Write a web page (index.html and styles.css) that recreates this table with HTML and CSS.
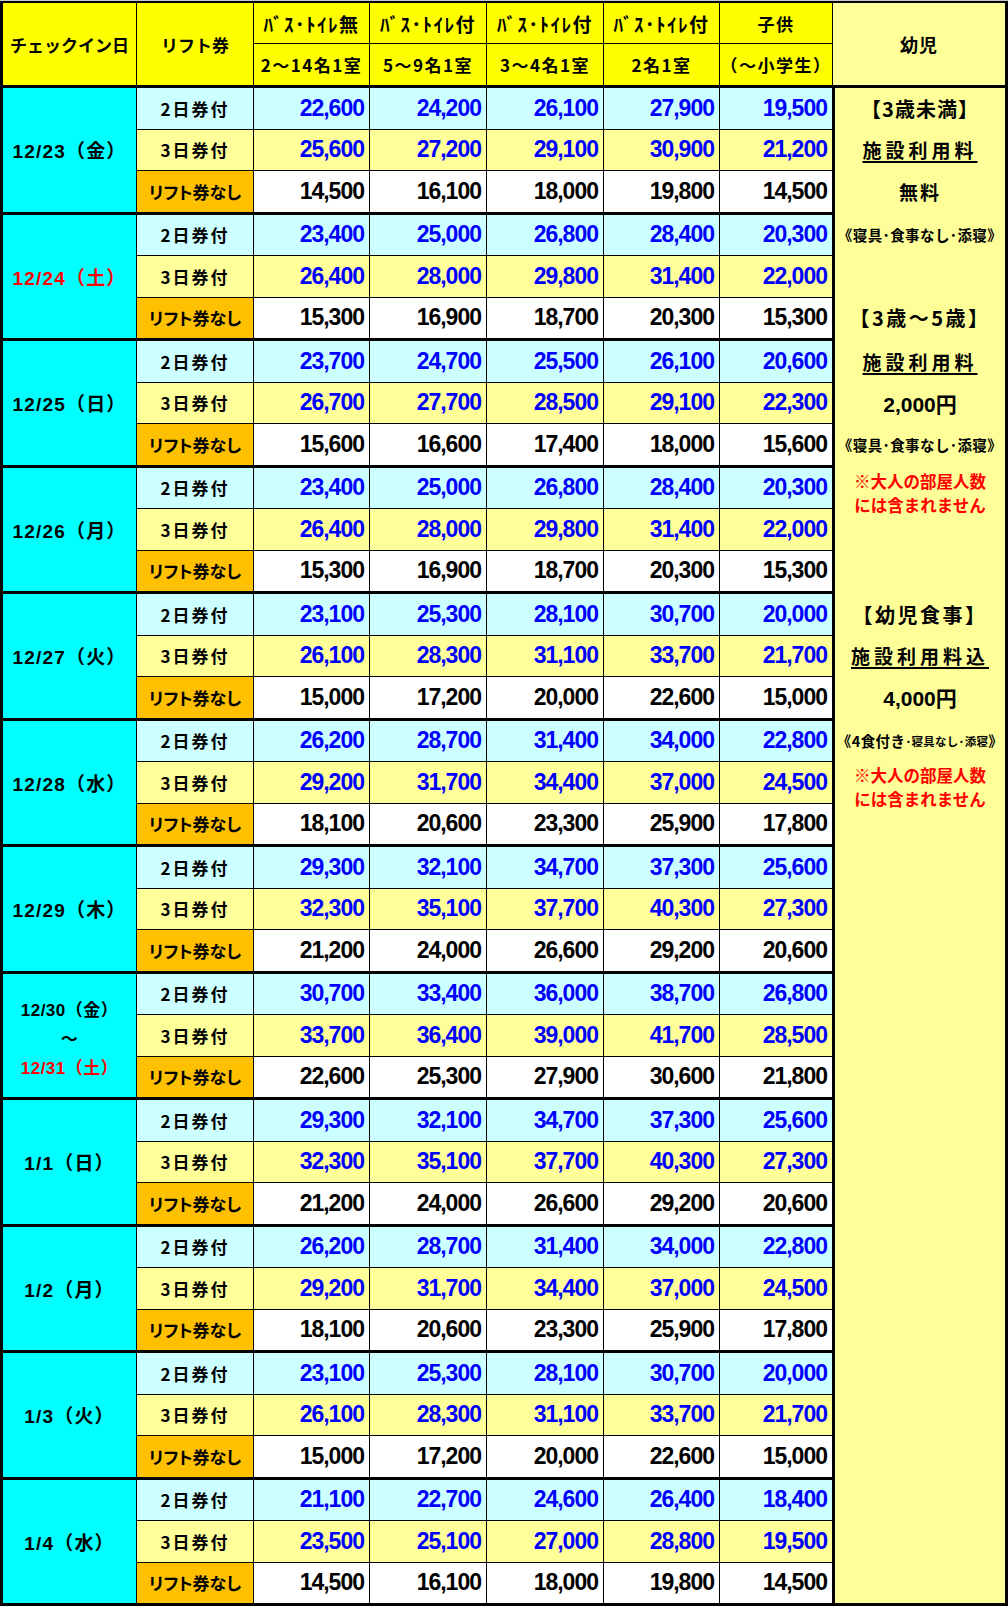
FILE: index.html
```html
<!DOCTYPE html>
<html lang="ja">
<head>
<meta charset="utf-8">
<title>料金表</title>
<link rel="stylesheet" href="styles.css">
</head>
<body>
<div class="sheet">
  <!-- 幼児 column -->
  <div class="infant-bg"></div>
  <div class="inf r4 bracket narrow">【3歳未満】</div>
  <div class="inf r5 under">施設利用料</div>
  <div class="inf r6 main">無料</div>
  <div class="inf r8 note">《寝具･食事なし･添寝》</div>
  <div class="inf r10 bracket">【3歳～5歳】</div>
  <div class="inf r12 under">施設利用料</div>
  <div class="inf r13 main num">2,000円</div>
  <div class="inf r14 note">《寝具･食事なし･添寝》</div>
  <div class="inf r16 warn">※大人の部屋人数<br>には含まれません</div>
  <div class="inf r20 bracket">【幼児食事】</div>
  <div class="inf r21 under">施設利用料込</div>
  <div class="inf r22 main num">4,000円</div>
  <div class="inf r24 note"><span>《4食付き</span><span class="tiny">･寝具なし･添寝</span><span>》</span></div>
  <div class="inf r25 warn">※大人の部屋人数<br>には含まれません</div>

  <!-- header -->
  <div class="hd tall">チェックイン日</div>
  <div class="hd tall">リフト券</div>
  <div class="hd kana">ﾊﾞｽ･ﾄｲﾚ無</div>
  <div class="hd kana">ﾊﾞｽ･ﾄｲﾚ付</div>
  <div class="hd kana">ﾊﾞｽ･ﾄｲﾚ付</div>
  <div class="hd kana">ﾊﾞｽ･ﾄｲﾚ付</div>
  <div class="hd">子供</div>
  <div class="hd tall light">幼児</div>
  <div class="hd">2～14名1室</div>
  <div class="hd">5～9名1室</div>
  <div class="hd">3～4名1室</div>
  <div class="hd">2名1室</div>
  <div class="hd">（～小学生）</div>
  <div class="sep-h"></div>

  <!-- 12/23 -->
  <div class="date">12/23（金）</div>
  <div class="lbl d2">2日券付</div><div class="n d2">22,600</div><div class="n d2">24,200</div><div class="n d2">26,100</div><div class="n d2">27,900</div><div class="n d2">19,500</div>
  <div class="lbl d3">3日券付</div><div class="n d3">25,600</div><div class="n d3">27,200</div><div class="n d3">29,100</div><div class="n d3">30,900</div><div class="n d3">21,200</div>
  <div class="lbl d0">リフト券なし</div><div class="n d0">14,500</div><div class="n d0">16,100</div><div class="n d0">18,000</div><div class="n d0">19,800</div><div class="n d0">14,500</div>
  <div class="sep"></div>

  <!-- 12/24 -->
  <div class="date red">12/24（土）</div>
  <div class="lbl d2">2日券付</div><div class="n d2">23,400</div><div class="n d2">25,000</div><div class="n d2">26,800</div><div class="n d2">28,400</div><div class="n d2">20,300</div>
  <div class="lbl d3">3日券付</div><div class="n d3">26,400</div><div class="n d3">28,000</div><div class="n d3">29,800</div><div class="n d3">31,400</div><div class="n d3">22,000</div>
  <div class="lbl d0">リフト券なし</div><div class="n d0">15,300</div><div class="n d0">16,900</div><div class="n d0">18,700</div><div class="n d0">20,300</div><div class="n d0">15,300</div>
  <div class="sep"></div>

  <!-- 12/25 -->
  <div class="date">12/25（日）</div>
  <div class="lbl d2">2日券付</div><div class="n d2">23,700</div><div class="n d2">24,700</div><div class="n d2">25,500</div><div class="n d2">26,100</div><div class="n d2">20,600</div>
  <div class="lbl d3">3日券付</div><div class="n d3">26,700</div><div class="n d3">27,700</div><div class="n d3">28,500</div><div class="n d3">29,100</div><div class="n d3">22,300</div>
  <div class="lbl d0">リフト券なし</div><div class="n d0">15,600</div><div class="n d0">16,600</div><div class="n d0">17,400</div><div class="n d0">18,000</div><div class="n d0">15,600</div>
  <div class="sep"></div>

  <!-- 12/26 -->
  <div class="date">12/26（月）</div>
  <div class="lbl d2">2日券付</div><div class="n d2">23,400</div><div class="n d2">25,000</div><div class="n d2">26,800</div><div class="n d2">28,400</div><div class="n d2">20,300</div>
  <div class="lbl d3">3日券付</div><div class="n d3">26,400</div><div class="n d3">28,000</div><div class="n d3">29,800</div><div class="n d3">31,400</div><div class="n d3">22,000</div>
  <div class="lbl d0">リフト券なし</div><div class="n d0">15,300</div><div class="n d0">16,900</div><div class="n d0">18,700</div><div class="n d0">20,300</div><div class="n d0">15,300</div>
  <div class="sep"></div>

  <!-- 12/27 -->
  <div class="date">12/27（火）</div>
  <div class="lbl d2">2日券付</div><div class="n d2">23,100</div><div class="n d2">25,300</div><div class="n d2">28,100</div><div class="n d2">30,700</div><div class="n d2">20,000</div>
  <div class="lbl d3">3日券付</div><div class="n d3">26,100</div><div class="n d3">28,300</div><div class="n d3">31,100</div><div class="n d3">33,700</div><div class="n d3">21,700</div>
  <div class="lbl d0">リフト券なし</div><div class="n d0">15,000</div><div class="n d0">17,200</div><div class="n d0">20,000</div><div class="n d0">22,600</div><div class="n d0">15,000</div>
  <div class="sep"></div>

  <!-- 12/28 -->
  <div class="date">12/28（水）</div>
  <div class="lbl d2">2日券付</div><div class="n d2">26,200</div><div class="n d2">28,700</div><div class="n d2">31,400</div><div class="n d2">34,000</div><div class="n d2">22,800</div>
  <div class="lbl d3">3日券付</div><div class="n d3">29,200</div><div class="n d3">31,700</div><div class="n d3">34,400</div><div class="n d3">37,000</div><div class="n d3">24,500</div>
  <div class="lbl d0">リフト券なし</div><div class="n d0">18,100</div><div class="n d0">20,600</div><div class="n d0">23,300</div><div class="n d0">25,900</div><div class="n d0">17,800</div>
  <div class="sep"></div>

  <!-- 12/29 -->
  <div class="date">12/29（木）</div>
  <div class="lbl d2">2日券付</div><div class="n d2">29,300</div><div class="n d2">32,100</div><div class="n d2">34,700</div><div class="n d2">37,300</div><div class="n d2">25,600</div>
  <div class="lbl d3">3日券付</div><div class="n d3">32,300</div><div class="n d3">35,100</div><div class="n d3">37,700</div><div class="n d3">40,300</div><div class="n d3">27,300</div>
  <div class="lbl d0">リフト券なし</div><div class="n d0">21,200</div><div class="n d0">24,000</div><div class="n d0">26,600</div><div class="n d0">29,200</div><div class="n d0">20,600</div>
  <div class="sep"></div>

  <!-- 12/30 - 12/31 -->
  <div class="date multi"><span>12/30（金）</span><span>～</span><span class="red">12/31（土）</span></div>
  <div class="lbl d2">2日券付</div><div class="n d2">30,700</div><div class="n d2">33,400</div><div class="n d2">36,000</div><div class="n d2">38,700</div><div class="n d2">26,800</div>
  <div class="lbl d3">3日券付</div><div class="n d3">33,700</div><div class="n d3">36,400</div><div class="n d3">39,000</div><div class="n d3">41,700</div><div class="n d3">28,500</div>
  <div class="lbl d0">リフト券なし</div><div class="n d0">22,600</div><div class="n d0">25,300</div><div class="n d0">27,900</div><div class="n d0">30,600</div><div class="n d0">21,800</div>
  <div class="sep"></div>

  <!-- 1/1 -->
  <div class="date">1/1（日）</div>
  <div class="lbl d2">2日券付</div><div class="n d2">29,300</div><div class="n d2">32,100</div><div class="n d2">34,700</div><div class="n d2">37,300</div><div class="n d2">25,600</div>
  <div class="lbl d3">3日券付</div><div class="n d3">32,300</div><div class="n d3">35,100</div><div class="n d3">37,700</div><div class="n d3">40,300</div><div class="n d3">27,300</div>
  <div class="lbl d0">リフト券なし</div><div class="n d0">21,200</div><div class="n d0">24,000</div><div class="n d0">26,600</div><div class="n d0">29,200</div><div class="n d0">20,600</div>
  <div class="sep"></div>

  <!-- 1/2 -->
  <div class="date">1/2（月）</div>
  <div class="lbl d2">2日券付</div><div class="n d2">26,200</div><div class="n d2">28,700</div><div class="n d2">31,400</div><div class="n d2">34,000</div><div class="n d2">22,800</div>
  <div class="lbl d3">3日券付</div><div class="n d3">29,200</div><div class="n d3">31,700</div><div class="n d3">34,400</div><div class="n d3">37,000</div><div class="n d3">24,500</div>
  <div class="lbl d0">リフト券なし</div><div class="n d0">18,100</div><div class="n d0">20,600</div><div class="n d0">23,300</div><div class="n d0">25,900</div><div class="n d0">17,800</div>
  <div class="sep"></div>

  <!-- 1/3 -->
  <div class="date">1/3（火）</div>
  <div class="lbl d2">2日券付</div><div class="n d2">23,100</div><div class="n d2">25,300</div><div class="n d2">28,100</div><div class="n d2">30,700</div><div class="n d2">20,000</div>
  <div class="lbl d3">3日券付</div><div class="n d3">26,100</div><div class="n d3">28,300</div><div class="n d3">31,100</div><div class="n d3">33,700</div><div class="n d3">21,700</div>
  <div class="lbl d0">リフト券なし</div><div class="n d0">15,000</div><div class="n d0">17,200</div><div class="n d0">20,000</div><div class="n d0">22,600</div><div class="n d0">15,000</div>
  <div class="sep"></div>

  <!-- 1/4 -->
  <div class="date">1/4（水）</div>
  <div class="lbl d2">2日券付</div><div class="n d2">21,100</div><div class="n d2">22,700</div><div class="n d2">24,600</div><div class="n d2">26,400</div><div class="n d2">18,400</div>
  <div class="lbl d3">3日券付</div><div class="n d3">23,500</div><div class="n d3">25,100</div><div class="n d3">27,000</div><div class="n d3">28,800</div><div class="n d3">19,500</div>
  <div class="lbl d0">リフト券なし</div><div class="n d0">14,500</div><div class="n d0">16,100</div><div class="n d0">18,000</div><div class="n d0">19,800</div><div class="n d0">14,500</div>
</div>
</body>
</html>
```

FILE: styles.css
```css
html, body {
  margin: 0;
  padding: 0;
  background: #ffffff;
}

body {
  font-family: "Noto Sans CJK JP", sans-serif;
  font-weight: 700;
  color: #000000;
}

.sheet {
  display: grid;
  width: 1002px;
  grid-template-columns: 133px 116px 115px 116px 116px 115px 112px 172px;
  grid-template-rows:
    40px 41px 1px
    repeat(11, 40.5px 40.5px 40.5px 1px)
    40.5px 40.5px 40.5px;
  gap: 1px;
  background: #000000;
  border-top: 1px solid #c8c8c8;
  padding: 2px 3px 3px 3px;
}

/* header */
.hd {
  background: #ffff00;
  display: flex;
  align-items: center;
  justify-content: center;
  font-size: 17px;
  letter-spacing: 1.5px;
  white-space: nowrap;
}
.hd.kana {
  font-size: 19px;
  letter-spacing: 1.5px;
}
.hd.tall {
  grid-row: span 2;
  letter-spacing: 0;
}
.hd.light {
  background: #ffff99;
  font-size: 18px;
  letter-spacing: 1px;
}

.sep-h {
  grid-column: 1 / -1;
}
.sep {
  grid-column: 1 / span 7;
}

/* date column */
.date {
  grid-row: span 3;
  background: #00ffff;
  display: flex;
  align-items: center;
  justify-content: center;
  font-family: "Liberation Sans", "Noto Sans CJK JP", sans-serif;
  font-size: 19px;
  letter-spacing: 1.2px;
  white-space: nowrap;
}
.date.multi {
  flex-direction: column;
  font-size: 17px;
  line-height: 29px;
  padding-top: 8px;
  letter-spacing: 0.5px;
}
.red {
  color: #ff0000;
}

/* lift labels */
.lbl {
  display: flex;
  align-items: center;
  justify-content: center;
  font-size: 17px;
  letter-spacing: 2px;
  white-space: nowrap;
}
.lbl.d0 {
  background: #ffc000;
  letter-spacing: 0;
  font-feature-settings: "palt";
}

/* numbers */
.n {
  display: flex;
  align-items: center;
  justify-content: flex-end;
  padding-right: 5px;
  font-family: "Liberation Sans", sans-serif;
  font-size: 23px;
  letter-spacing: -1px;
}
.d2 {
  background: #ccffff;
}
.d3 {
  background: #ffff99;
}
.n.d2, .n.d3 {
  color: #0000ff;
}
.d0 {
  background: #ffffff;
}

/* infant column */
.infant-bg {
  grid-column: 8;
  grid-row: 4 / -1;
  background: #ffff99;
  border-left: 2px solid #000000;
}
.inf {
  grid-column: 8;
  display: flex;
  align-items: center;
  justify-content: center;
  padding-left: 2px;
  white-space: nowrap;
  font-size: 19px;
}
.inf.bracket {
  font-size: 20px;
  letter-spacing: 2.5px;
}
.inf.bracket.narrow {
  letter-spacing: 1px;
}
.inf.under {
  letter-spacing: 4px;
  text-decoration: underline;
  text-decoration-thickness: 1.5px;
  text-underline-offset: 3px;
}
.inf.main {
  letter-spacing: 2px;
}
.inf.num {
  font-family: "Liberation Sans", "Noto Sans CJK JP", sans-serif;
  font-size: 21px;
  letter-spacing: 0;
}
.inf.note {
  font-size: 14.5px;
  letter-spacing: 0.4px;
}
.inf.note .tiny {
  font-size: 11.5px;
  letter-spacing: 0.3px;
}
.inf.warn {
  color: #ff0000;
  font-size: 16.5px;
  line-height: 24px;
  text-align: center;
  padding-top: 10px;
}

.r4 { grid-row: 4; }
.r5 { grid-row: 5; }
.r6 { grid-row: 6; }
.r8 { grid-row: 8; }
.r10 { grid-row: 10; }
.r12 { grid-row: 12; }
.r13 { grid-row: 13; }
.r14 { grid-row: 14; }
.r16 { grid-row: 16; }
.r20 { grid-row: 20; }
.r21 { grid-row: 21; }
.r22 { grid-row: 22; }
.r24 { grid-row: 24; }
.r25 { grid-row: 25; }
```
